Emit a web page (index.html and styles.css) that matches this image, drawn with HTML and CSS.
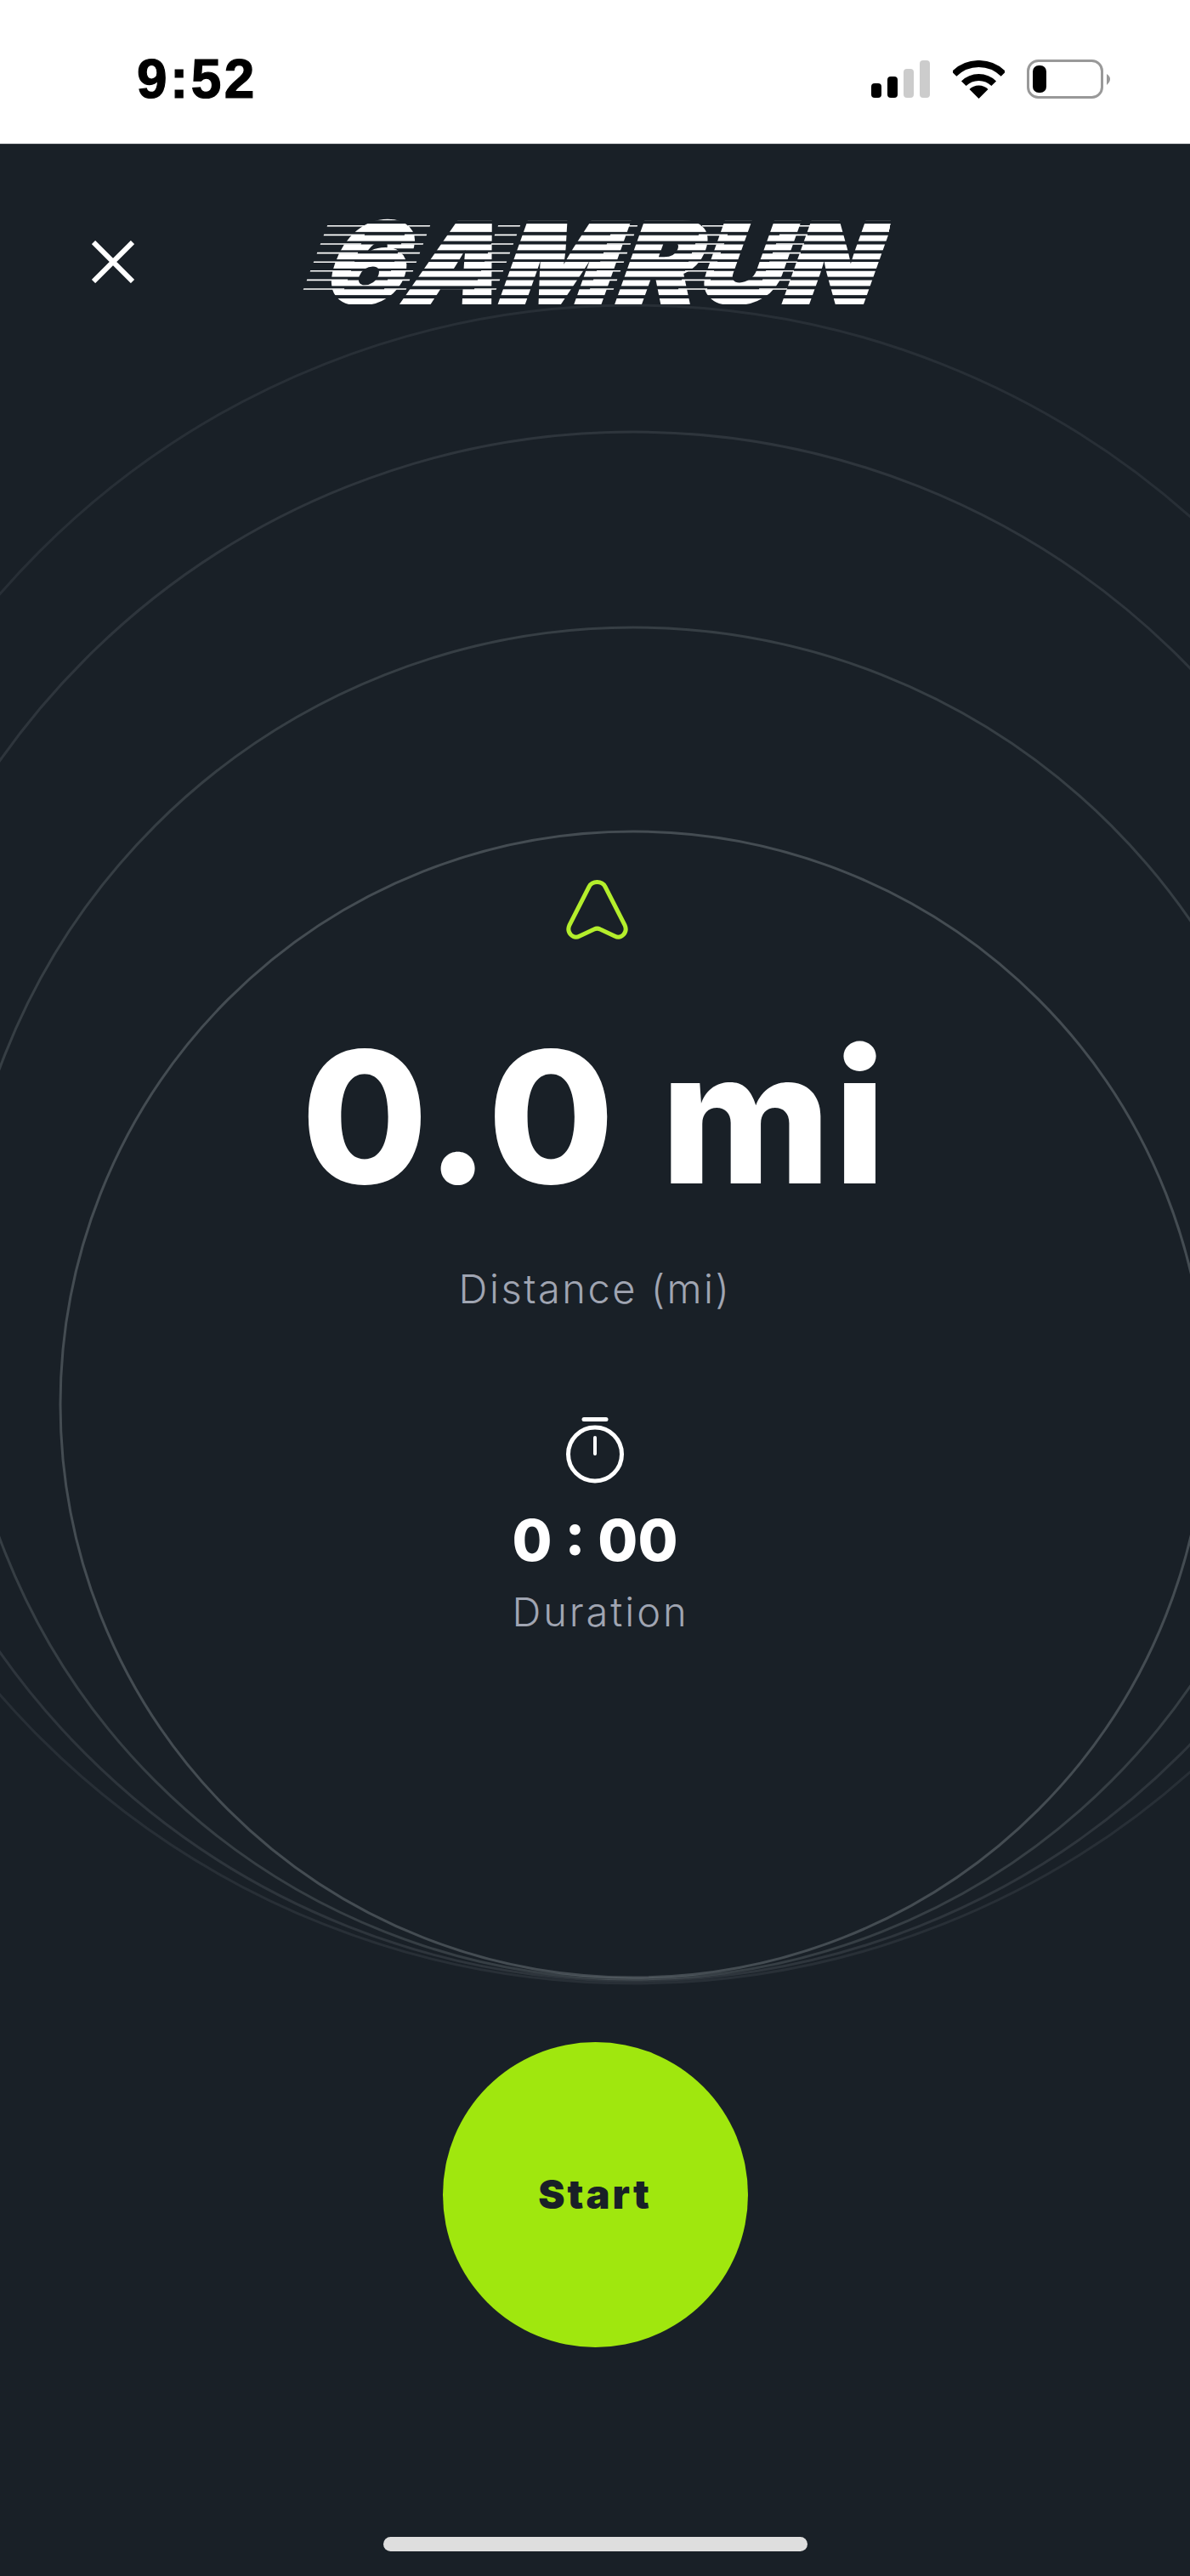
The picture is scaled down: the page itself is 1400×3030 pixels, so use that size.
FILE: index.html
```html
<!DOCTYPE html>
<html>
<head>
    <title>6AM Run</title>
    <link rel="stylesheet" href="styles.css">
</head>
<body>
    <div class="status-bar">
        <span class="time">9:52</span>
        <div class="status-icons">
            <svg class="signal" width="69" height="44" viewBox="0 0 69 44">
                <rect x="0" y="27" width="12" height="17" rx="4" fill="#000"/>
                <rect x="19" y="19" width="12" height="25" rx="4" fill="#000"/>
                <rect x="38" y="10" width="12" height="34" rx="4" fill="#ccc"/>
                <rect x="57" y="0" width="12" height="44" rx="4" fill="#ccc"/>
            </svg>
            <svg class="wifi" width="61" height="45" viewBox="0 0 61 45">
                <path d="M1.5 16 A41 41 0 0 1 59.5 16" fill="none" stroke="#000" stroke-width="8"/>
                <path d="M12.8 27.3 A25 25 0 0 1 48.2 27.3" fill="none" stroke="#000" stroke-width="8"/>
                <path d="M19.5 34 A15.5 15.5 0 0 1 41.5 34 L30.5 45 Z" fill="#000"/>
            </svg>
            <svg class="battery" width="98" height="46" viewBox="0 0 98 46">
                <rect x="1.5" y="1.5" width="87" height="43" rx="12" fill="none" stroke="#999" stroke-width="3"/>
                <rect x="7" y="7" width="16" height="32" rx="7" fill="#000"/>
                <path d="M94 17 C97 19 98 21 98 23 C98 25 97 27 94 30 Z" fill="#999"/>
            </svg>
        </div>
    </div>

    <main class="screen">
        <svg class="rings" width="1400" height="2861" viewBox="0 169 1400 2861">
            <circle cx="745" cy="1345" r="987" stroke-opacity="0.08"/>
            <circle cx="745" cy="1418" r="911" stroke-opacity="0.11"/>
            <circle cx="745" cy="1532" r="795" stroke-opacity="0.15"/>
            <circle cx="745" cy="1651" r="674" stroke-opacity="0.22"/>
        </svg>

        <header class="top-bar">
            <svg class="close-icon" width="50" height="50" viewBox="0 0 50 50">
                <path d="M2 2 L48 48 M48 2 L2 48" stroke="#fff" stroke-width="6" fill="none"/>
            </svg>
            <div class="logo">
                <svg class="logo-lines" width="700" height="100" viewBox="0 0 700 100">
                    <defs>
                        <path id="logo-row" d="M7 0H55 M102 0H128 M208 0H234 M344 0H372 M448 0H482 M543 0H576"/>
                    </defs>
                    <g transform="translate(0 82) skewX(-20.6)" stroke="#fff" stroke-width="1.6" fill="none">
                        <use href="#logo-row" y="0"/>
                        <use href="#logo-row" y="-10.6"/>
                        <use href="#logo-row" y="-21.2"/>
                        <use href="#logo-row" y="-31.8"/>
                        <use href="#logo-row" y="-42.4"/>
                        <use href="#logo-row" y="-53"/>
                        <use href="#logo-row" y="-63.6"/>
                        <use href="#logo-row" y="-74.2"/>
                    </g>
                </svg>
                <span class="logo-text">6AM RUN</span>
            </div>
        </header>

        <div class="stats">
            <svg class="nav-icon" width="73" height="70" viewBox="0 0 73 70">
                <path d="M27 8 C31 .8 42 .8 46 8 L69 53 C73 62 65 70 57 66 L40 58 C38 57 35 57 33 58 L16 66 C8 70 0 62 4 53 Z" fill="none" stroke="#b4ee2c" stroke-width="5"/>
            </svg>
            <div class="distance">0.0 mi</div>
            <div class="label label-distance">Distance (mi)</div>
            <svg class="timer-icon" width="68" height="78" viewBox="0 0 68 78">
                <path d="M21 2.5 H47" stroke="#fff" stroke-width="5" stroke-linecap="round" fill="none"/>
                <circle cx="34" cy="43.5" r="31.5" stroke="#fff" stroke-width="5" fill="none"/>
                <path d="M34 24 V43" stroke="#fff" stroke-width="4" stroke-linecap="round" fill="none"/>
            </svg>
            <div class="duration">0 : 00</div>
            <div class="label label-duration">Duration</div>
        </div>

        <button class="start-btn">Start</button>
        <div class="home-bar"></div>
    </main>
</body>
</html>
```

FILE: styles.css
```css
body {
    margin: 0;
    width: 1400px;
    height: 3030px;
    overflow: hidden;
    display: flex;
    flex-direction: column;
    font-family: Inter, "Liberation Sans", sans-serif;
    background-color: #192027;
}

.status-bar {
    height: 169px;
    flex-shrink: 0;
    display: flex;
    justify-content: space-between;
    align-items: flex-start;
    padding: 0 94px 0 161px;
    background-color: #fff;
}

.time {
    margin-top: 56px;
    font-family: "Liberation Sans", sans-serif;
    font-size: 64px;
    line-height: 74px;
    font-weight: bold;
    letter-spacing: 3.4px;
    color: #000;
    -webkit-text-stroke: 1.2px #000;
}

.status-icons {
    display: flex;
    align-items: flex-start;
    margin-top: 70px;
}

.signal {
    margin-top: 1px;
}

.wifi {
    margin-top: 1px;
    margin-left: 27px;
}

.battery {
    margin-left: 26px;
}

.screen {
    flex: 1;
    position: relative;
    display: flex;
    flex-direction: column;
    align-items: center;
    border-top: 1px solid #3a4046;
}

.rings {
    position: absolute;
    top: 0;
    left: 0;
}

.rings circle {
    fill: none;
    stroke: #dfe8ee;
    stroke-width: 3;
}

.top-bar {
    position: relative;
    align-self: stretch;
    height: 188px;
    display: flex;
    align-items: flex-start;
    padding-left: 108px;
}

.close-icon {
    margin-top: 113px;
}

.logo {
    position: relative;
    margin-left: 192px;
    margin-top: 88px;
    width: 700px;
    height: 100px;
}

.logo-lines {
    position: absolute;
    top: 0;
    left: 0;
}

.logo-text {
    position: absolute;
    left: 34px;
    top: -14px;
    font-size: 130px;
    line-height: 130px;
    font-weight: 900;
    font-style: italic;
    white-space: nowrap;
    word-spacing: -26px;
    letter-spacing: 4px;
    transform: scaleX(1.04) skewX(-10deg);
    transform-origin: left 100px;
    -webkit-text-stroke: 5px transparent;
    color: transparent;
    background: repeating-linear-gradient(to bottom, #fff 0, #fff 7px, transparent 7px, transparent 10.6px);
    background-position: 0 22px;
    -webkit-background-clip: text;
    background-clip: text;
}

.stats {
    position: relative;
    display: flex;
    flex-direction: column;
    align-items: center;
    margin-top: 677px;
    width: 100%;
}

.nav-icon {
    margin-left: 4px;
}

.distance {
    margin-top: 77px;
    font-size: 216px;
    line-height: 264px;
    font-weight: 800;
    letter-spacing: 3.5px;
    color: #fff;
}

.label {
    color: #a0a5b2;
    font-weight: 300;
    font-size: 47px;
    line-height: 56px;
}

.label-distance {
    margin-top: 42px;
    letter-spacing: 2.5px;
}

.timer-icon {
    margin-top: 123px;
}

.duration {
    margin-top: 25px;
    font-size: 68px;
    line-height: 82px;
    font-weight: 800;
    color: #fff;
}

.label-duration {
    margin-left: 13px;
    margin-top: 16px;
    letter-spacing: 2.9px;
}

.start-btn {
    position: relative;
    margin-top: 478px;
    width: 359px;
    height: 359px;
    padding: 0 0 3px;
    border: none;
    border-radius: 50%;
    background-color: #a0e70e;
    color: #192027;
    font-family: inherit;
    font-size: 47px;
    font-weight: 900;
    letter-spacing: 3px;
}

.home-bar {
    position: relative;
    margin-top: 223px;
    width: 499px;
    height: 17px;
    border-radius: 9px;
    background-color: #dedede;
}
```
